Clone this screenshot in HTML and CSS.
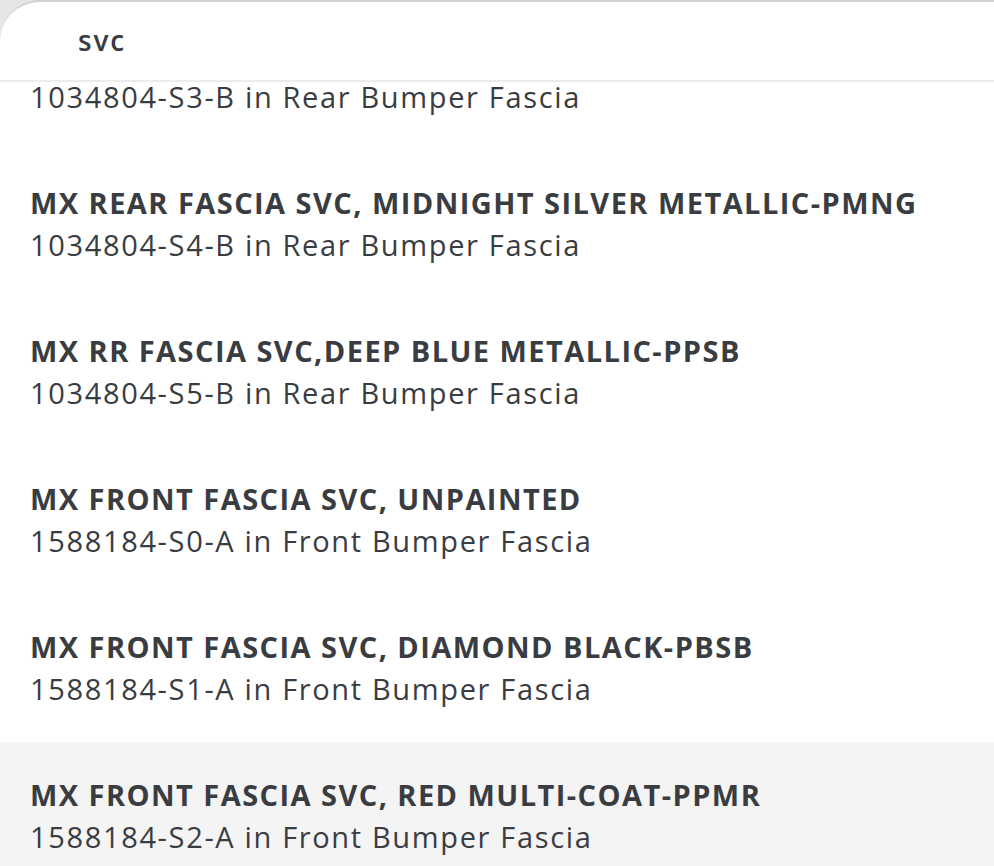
FILE: index.html
```html
<!DOCTYPE html>
<html lang="en">
<head>
<meta charset="utf-8">
<title>Search</title>
<link rel="stylesheet" href="styles.css">
</head>
<body>
<div class="panel">
  <div class="search">
    <span class="query">svc</span>
  </div>
  <ul class="results">
    <li class="item partial">
      <div class="sub">1034804-S3-B in Rear Bumper Fascia</div>
    </li>
    <li class="item">
      <div class="title">MX REAR FASCIA SVC, MIDNIGHT SILVER METALLIC-PMNG</div>
      <div class="sub">1034804-S4-B in Rear Bumper Fascia</div>
    </li>
    <li class="item">
      <div class="title">MX RR FASCIA SVC,DEEP BLUE METALLIC-PPSB</div>
      <div class="sub">1034804-S5-B in Rear Bumper Fascia</div>
    </li>
    <li class="item">
      <div class="title">MX FRONT FASCIA SVC, UNPAINTED</div>
      <div class="sub">1588184-S0-A in Front Bumper Fascia</div>
    </li>
    <li class="item">
      <div class="title">MX FRONT FASCIA SVC, DIAMOND BLACK-PBSB</div>
      <div class="sub">1588184-S1-A in Front Bumper Fascia</div>
    </li>
    <li class="item active">
      <div class="title">MX FRONT FASCIA SVC, RED MULTI-COAT-PPMR</div>
      <div class="sub">1588184-S2-A in Front Bumper Fascia</div>
    </li>
  </ul>
</div>
</body>
</html>
```
FILE: styles.css
```css
html, body {
  margin: 0;
  padding: 0;
  background: #e6e6e6;
  height: 100%;
  overflow: hidden;
}
body {
  font-family: "Open Sans", "Liberation Sans", sans-serif;
  color: #393c41;
}
.panel {
  height: 864px;
  background: #ffffff;
  border-top: 2px solid #d2d2d2;
  border-top-left-radius: 40px;
  overflow: hidden;
}
.search {
  height: 78px;
  border-bottom: 2px solid #ececec;
  display: flex;
  align-items: center;
  padding-left: 78px;
}
.query {
  font-size: 28px;
  font-weight: 600;
  letter-spacing: 1.8px;
  padding-bottom: 2px;
}
.results {
  list-style: none;
  margin: 0;
  padding: 0;
}
.item {
  padding: 32px 30px;
}
.item.partial {
  padding-top: 0;
}
.item.partial .sub {
  line-height: 30px;
  padding-bottom: 6px;
}
.item.active {
  background: #f4f4f4;
}
.title {
  font-size: 29px;
  font-weight: 700;
  line-height: 42px;
  letter-spacing: 1.45px;
  white-space: nowrap;
}
.sub {
  font-size: 29px;
  font-weight: 400;
  line-height: 42px;
  letter-spacing: 1.65px;
  white-space: nowrap;
}
```
